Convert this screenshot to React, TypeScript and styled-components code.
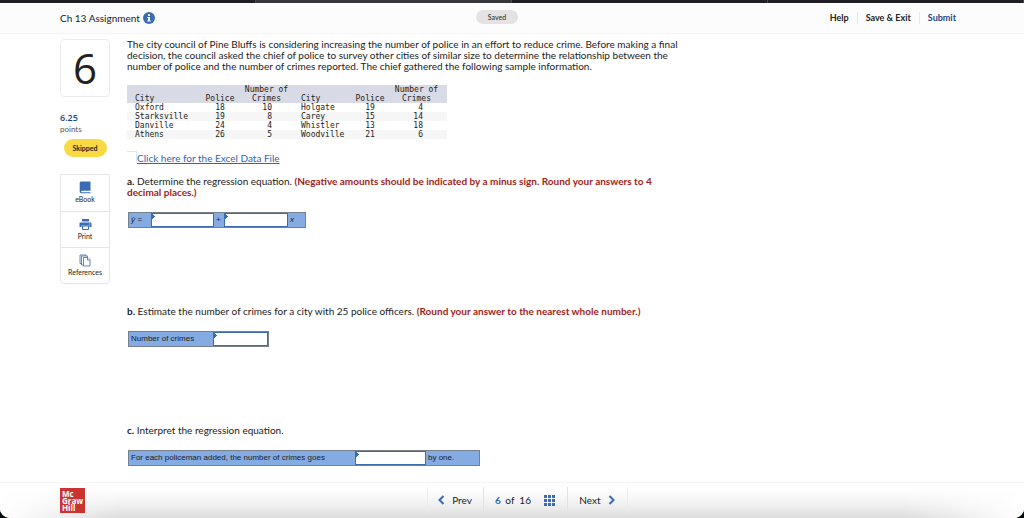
import React from "react";
import styled, { createGlobalStyle } from "styled-components";

const sans = `Lato, "Open Sans", sans-serif`;
const humanist = `"Open Sans", "Noto Sans", sans-serif`;
const arial = `"Liberation Sans", Arial, sans-serif`;
const mono = `"DejaVu Sans Mono", "Liberation Mono", monospace`;
const blue = "#3b6cb3";

const GlobalStyle = createGlobalStyle`
  * { box-sizing: border-box; }
  body { margin: 0; background: #0a0a12; }
  button, input, select { font: inherit; color: inherit; }
`;

const Page = styled.div`
  min-height: 100vh;
  display: flex;
  flex-direction: column;
  background: #fff;
  border-radius: 0 0 10px 10px;
  overflow: hidden;
  font-family: ${sans};
  font-size: 10px;
  line-height: 11px;
  color: #222;
`;

const TabStrip = styled.div`
  display: flex;
  height: 3px;
`;

const TabEdge = styled.span<{ $active?: boolean }>`
  flex: 1;
  background: ${(p) => (p.$active ? "#38373c" : "#1f1e22")};
  border-right: 1px solid #4b4a50;
`;

const Header = styled.header`
  display: grid;
  grid-template-columns: 1fr auto 1fr;
  height: 31px;
  padding: 0 60px;
  background: #fcfcfc;
  border-bottom: 1px solid #f5f5f5;
`;

const Title = styled.h1`
  display: flex;
  align-items: center;
  gap: 3px;
  margin: 0;
  font-size: 10px;
  font-weight: 400;
`;

const Status = styled.span`
  align-self: start;
  margin: 7px 0 0 -30px;
  width: 42px;
  border-radius: 7px;
  background: #e4e2e5;
  font-size: 7px;
  line-height: 14px;
  text-align: center;
`;

const Actions = styled.div`
  display: flex;
  align-items: center;
  justify-content: flex-end;
`;

const Action = styled.button<{ $primary?: boolean }>`
  height: 12px;
  padding: 0 8px;
  border: 0;
  border-left: 1px solid #e8e8e8;
  background: none;
  font-size: 9px;
  font-weight: 700;
  line-height: 12px;
  color: ${(p) => (p.$primary ? "#1f4687" : "#222")};
  &:first-child { border-left: 0; }
`;

const Body = styled.main`
  flex: 1;
  display: grid;
  grid-template-columns: 50px minmax(0, 600px);
  column-gap: 17px;
  padding: 5px 60px 0;
`;

const Side = styled.aside`
  display: flex;
  flex-direction: column;
`;

const NumberCard = styled.div`
  height: 58px;
  border: 1px solid #ececec;
  border-radius: 4px;
  font-family: ${humanist};
  font-size: 42px;
  line-height: 56px;
  text-align: center;
`;

const Points = styled.div`
  margin-top: 15px;
  font-size: 8px;
  line-height: 10px;
  color: #555;
  strong {
    display: block;
    font-family: ${humanist};
    font-size: 9px;
    line-height: 12px;
    font-weight: 600;
    color: #1f4687;
  }
`;

const Skipped = styled.span`
  align-self: center;
  margin-top: 5px;
  width: 43px;
  border-radius: 9px;
  background: #f8da45;
  font-size: 7px;
  font-weight: 700;
  line-height: 18px;
  text-align: center;
`;

const Tools = styled.div`
  margin-top: 17px;
  border: 1px solid #e6e6e6;
  border-radius: 0 0 4px 4px;
`;

const Tool = styled.button`
  display: flex;
  flex-direction: column;
  align-items: center;
  width: 100%;
  height: 36px;
  padding: 6px 0 0;
  border: 0;
  border-top: 1px solid #e6e6e6;
  background: none;
  font-size: 7px;
  line-height: 10px;
  &:first-child { border-top: 0; }
`;

const Question = styled.div`
  display: flex;
  flex-direction: column;
  align-items: flex-start;
`;

const Text = styled.p<{ $top?: number }>`
  margin: ${(p) => p.$top ?? 0}px 0 0;
`;

const Note = styled.strong`
  color: #a31d1a;
`;

const DataTable = styled.table`
  margin-top: 13px;
  width: 320px;
  table-layout: fixed;
  border-collapse: collapse;
  font-family: ${mono};
  font-size: 8px;
  line-height: 9px;
  th { font-weight: 400; vertical-align: bottom; background: #d8dbe5; }
  td, th { padding: 0; text-align: center; white-space: nowrap; }
  tbody tr:nth-child(even) { background: #f6f6f6; }
  th:nth-child(3n + 1), td:nth-child(3n + 1) { text-align: left; padding-left: 8px; }
  td:nth-child(3n) { text-align: right; padding-right: 21px; }
  th:last-child { padding-right: 4px; }
  td:last-child { padding-right: 24px; }
`;

const FileLine = styled.div`
  display: flex;
  margin-top: 12px;
`;

const Corner = styled.span`
  width: 10px;
  height: 12px;
  border: solid #e3e6e0;
  border-width: 1px 1px 0 0;
`;

const FileLink = styled.a`
  line-height: 14px;
  color: #2f66b5;
  text-decoration: underline;
`;

const Answer = styled.div<{ $top: number }>`
  display: flex;
  margin: ${(p) => p.$top}px 0 0 1px;
  height: 16px;
  border: 1px solid #77808e;
  background: #84abe2;
  font-family: ${arial};
  font-size: 8px;
  line-height: 14px;
`;

const AnswerLabel = styled.label<{ $w: number; $italic?: boolean }>`
  width: ${(p) => p.$w}px;
  padding-left: 2px;
  white-space: nowrap;
  font-style: ${(p) => (p.$italic ? "italic" : "normal")};
`;

const marker = `conic-gradient(from 225deg at 100% 50%, ${blue} 90deg, transparent 0) 0 0 / 3px 5px no-repeat, #fff`;

const Field = styled.input<{ $w: number }>`
  width: ${(p) => p.$w}px;
  height: 14px;
  padding: 0 4px;
  border: 1px solid ${blue};
  border-radius: 0;
  outline: 0;
  background: ${marker};
`;

const Choice = styled.select<{ $w: number }>`
  appearance: none;
  width: ${(p) => p.$w}px;
  height: 14px;
  padding: 0 4px;
  border: 1px solid ${blue};
  border-radius: 0;
  background: ${marker};
`;

const Footer = styled.footer`
  display: grid;
  grid-template-columns: 1fr auto 1fr;
  align-items: start;
  height: 36px;
  padding: 4px 60px 0;
  border-top: 1px solid #f5f5f5;
  background:
    linear-gradient(90deg, #fff, transparent 12%, transparent 88%, #fff),
    linear-gradient(#fff 15%, #f1f1f1 60%, #dcdcdc);
`;

const Logo = styled.div`
  width: 25px;
  height: 25px;
  margin-top: 1px;
  padding: 2px;
  background: #cb3331;
  color: #fff;
  font-family: ${humanist};
  font-size: 8px;
  font-weight: 700;
  line-height: 7px;
`;

const Pager = styled.nav`
  display: flex;
  height: 26px;
  margin-left: 30px;
  border: solid #ececec;
  border-width: 0 1px;
`;

const PagerCell = styled.button<{ $w: number }>`
  display: flex;
  align-items: center;
  justify-content: center;
  gap: 7px;
  width: ${(p) => p.$w}px;
  padding: 0;
  border: 0;
  background: none;
  & + & { border-left: 1px solid #e2e2e2; }
`;

const Count = styled.span`
  margin-right: 6px;
  strong { color: ${blue}; margin-right: 2px; }
`;

const InfoIcon = () => (
  <svg width="12" height="12" viewBox="0 0 12 12" aria-hidden="true">
    <circle cx="6" cy="6" r="6" fill={blue} />
    <path d="M5 2.300h2v1.700H5zM4.300 5H7v3.500h.8v1H4.200v-1H5V6h-.7z" fill="#fff" />
  </svg>
);

const BookIcon = () => (
  <svg width="12" height="13" viewBox="0 0 12 13" aria-hidden="true">
    <path d="M2 .5h9.500v9.300H2.700a.8.8 0 0 0 0 1.500h8.800v1H2.300A1.800 1.800 0 0 1 .7 10.500V2A1.500 1.500 0 0 1 2 .5z" fill={blue} />
  </svg>
);

const PrintIcon = () => (
  <svg width="13" height="13" viewBox="0 0 13 13" aria-hidden="true">
    <path d="M3 1h7v2.500H3zM1.500 4.500h10a1 1 0 0 1 1 1V9h-2V7.500h-8V9h-2V5.500a1 1 0 0 1 1-1z" fill={blue} />
    <path d="M3.500 8h6v3.500h-6z" fill="#fff" stroke={blue} />
    <circle cx="10.700" cy="6" r=".6" fill="#fff" />
  </svg>
);

const CopyIcon = () => (
  <svg width="12" height="13" viewBox="0 0 12 13" fill="#fff" stroke={blue} strokeWidth=".8" aria-hidden="true">
    <path d="M1 1h6v8.500H1z" />
    <path d="M2.500 2h6v9h-6z" />
    <path d="M4.500 3.500h4.500l2 2v6.500H4.500z" />
    <path d="M8.500 3.500V6H11" />
  </svg>
);

const Chevron = ({ right }: { right?: boolean }) => (
  <svg width="7" height="10" viewBox="0 0 7 10" fill="none" stroke={blue} strokeWidth="2" aria-hidden="true">
    <path d={right ? "M1.500 1l4 4-4 4" : "M5.500 1l-4 4 4 4"} />
  </svg>
);

const GridIcon = () => (
  <svg width="11" height="11" viewBox="0 0 11 11" fill={blue} aria-hidden="true">
    {[0, 4, 8].map((y) => [0, 4, 8].map((x) => <rect key={`${x}-${y}`} x={x} y={y} width="3" height="3" />))}
  </svg>
);

const rows = [
  ["Oxford", 18, 10, "Holgate", 19, 4],
  ["Starksville", 19, 8, "Carey", 15, 14],
  ["Danville", 24, 4, "Whistler", 13, 18],
  ["Athens", 26, 5, "Woodville", 21, 6],
];

export default function App() {
  return (
    <Page>
      <GlobalStyle />
      <TabStrip>
        <TabEdge />
        <TabEdge $active />
        <TabEdge />
        <TabEdge />
      </TabStrip>
      <Header>
        <Title>Ch 13 Assignment <InfoIcon /></Title>
        <Status>Saved</Status>
        <Actions>
          <Action>Help</Action>
          <Action>Save &amp; Exit</Action>
          <Action $primary>Submit</Action>
        </Actions>
      </Header>
      <Body>
        <Side>
          <NumberCard>6</NumberCard>
          <Points><strong>6.25</strong>points</Points>
          <Skipped>Skipped</Skipped>
          <Tools>
            <Tool><BookIcon />eBook</Tool>
            <Tool><PrintIcon />Print</Tool>
            <Tool><CopyIcon />References</Tool>
          </Tools>
        </Side>
        <Question>
          <Text>
            The city council of Pine Bluffs is considering increasing the number of police in an effort to reduce crime. Before making a final<br />
            decision, the council asked the chief of police to survey other cities of similar size to determine the relationship between the<br />
            number of police and the number of crimes reported. The chief gathered the following sample information.
          </Text>
          <DataTable>
            <colgroup>
              <col width="73" /><col width="40" /><col width="53" />
              <col width="57" /><col width="40" /><col width="57" />
            </colgroup>
            <thead>
              <tr>
                <th>City</th><th>Police</th><th>Number of<br />Crimes</th>
                <th>City</th><th>Police</th><th>Number of<br />Crimes</th>
              </tr>
            </thead>
            <tbody>
              {rows.map((row) => (
                <tr key={row[0]}>{row.map((cell, i) => <td key={i}>{cell}</td>)}</tr>
              ))}
            </tbody>
          </DataTable>
          <FileLine><Corner /><FileLink href="#data">Click here for the Excel Data File</FileLink></FileLine>
          <Text $top={11}>
            <b>a.</b> Determine the regression equation. <Note>(Negative amounts should be indicated by a minus sign. Round your answers to 4<br />decimal places.)</Note>
          </Text>
          <Answer $top={14}>
            <AnswerLabel $w={22} $italic htmlFor="intercept">ŷ =</AnswerLabel>
            <Field $w={63} id="intercept" />
            <AnswerLabel $w={10} htmlFor="slope">+</AnswerLabel>
            <Field $w={64} id="slope" />
            <AnswerLabel $w={17} $italic htmlFor="slope">x</AnswerLabel>
          </Answer>
          <Text $top={78}>
            <b>b.</b> Estimate the number of crimes for a city with 25 police officers. <Note>(Round your answer to the nearest whole number.)</Note>
          </Text>
          <Answer $top={14}>
            <AnswerLabel $w={84} htmlFor="crimes">Number of crimes</AnswerLabel>
            <Field $w={55} id="crimes" />
          </Answer>
          <Text $top={78}><b>c.</b> Interpret the regression equation.</Text>
          <Answer $top={14}>
            <AnswerLabel $w={226} htmlFor="direction">For each policeman added, the number of crimes goes</AnswerLabel>
            <Choice $w={71} id="direction"><option></option></Choice>
            <AnswerLabel $w={53} htmlFor="direction">by one.</AnswerLabel>
          </Answer>
        </Question>
      </Body>
      <Footer>
        <Logo>Mc<br />Graw<br />Hill</Logo>
        <Pager>
          <PagerCell $w={55}><Chevron />Prev</PagerCell>
          <PagerCell $w={84}><Count><strong>6</strong> of &nbsp;16</Count><GridIcon /></PagerCell>
          <PagerCell $w={60}>Next<Chevron right /></PagerCell>
        </Pager>
      </Footer>
    </Page>
  );
}
